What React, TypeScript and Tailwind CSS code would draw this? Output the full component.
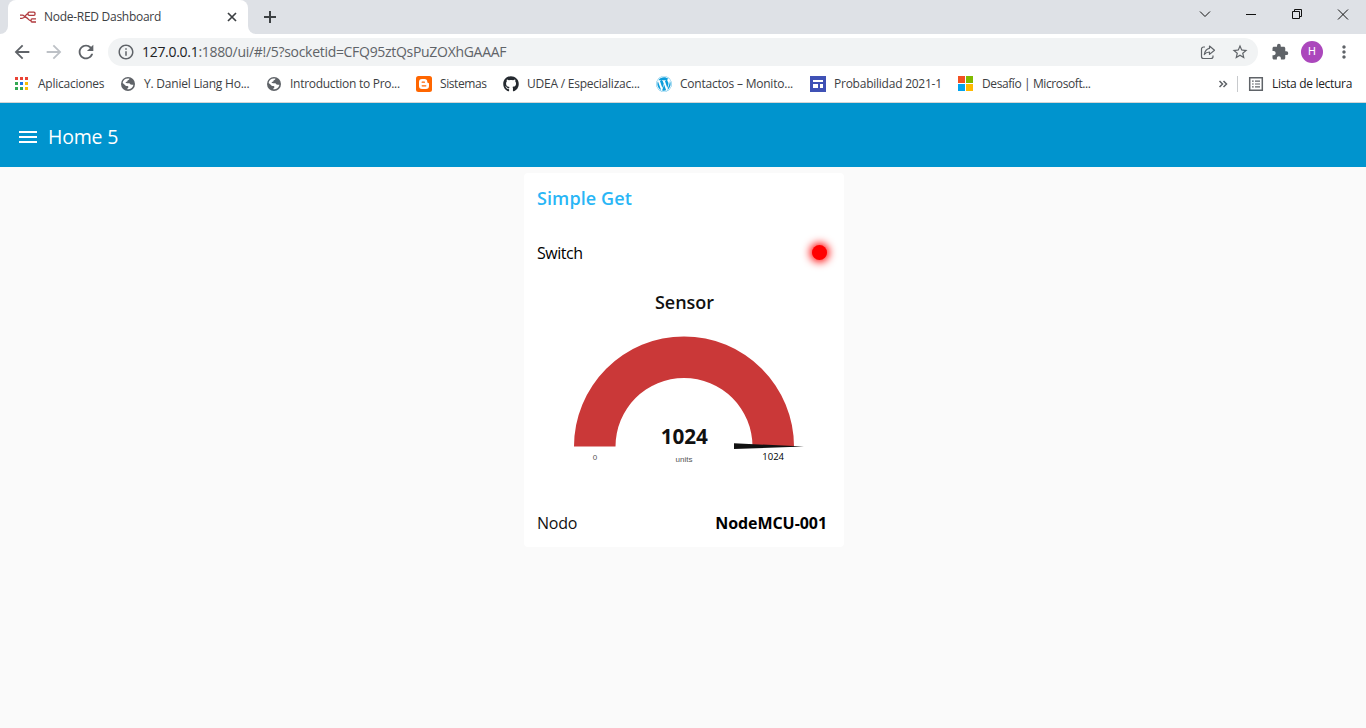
import React from "react";
import { MdArrowBack, MdArrowForward, MdRefresh, MdInfoOutline, MdStarBorder, MdExtension, MdMoreVert } from "react-icons/md";
import { FaGithub, FaWordpress } from "react-icons/fa";

function Text({ className = "", children }: { className?: string; children: React.ReactNode }) {
  return <span className={`whitespace-nowrap ${className}`}>{children}</span>;
}

const GlobeIcon = () => (
  <svg width="16" height="16" viewBox="0 0 16 16">
    <circle cx="8" cy="8" r="7" fill="#5f6368" />
    <path d="M9.300 2.600c.3 1-.5 1.400-1.400 1.700-.6.300-.2 1.200-1 1.500-.6.200-1.300.1-1.300.8 0 .6.700.6 1.400.6h2.200c.9 0 .8 1.100 1.500 1.400.8.300 1.900 0 2.700.1-.3 2-1.800 3.700-3.700 4.400-.8.200-1.700.2-2.500.1-.1-.8.600-1 1-1.500.4-.7.100-1.600-.7-1.700-.9-.1-1.500.1-2.200-.6C4.700 8.700 3.500 7.700 2.600 7 3 4.200 5.300 2 9.300 2.600z" fill="#fff" />
  </svg>
);

const NodeRedIcon = () => (
  <svg width="16" height="16" viewBox="0 0 16 16" fill="none" stroke="#b0393d" strokeWidth="1.300">
    <path d="M0 6.200h2.500c1.500 0 2 1.900 3.500 1.900M0 9.400h2c3.500 0 3-4.600 6-4.600M5 8c3 0 3 3.700 6 3.700" />
    <rect x="8" y="3.200" width="7" height="3.200" rx="1.100" />
    <path d="M16 9.800h-4c-1.300 0-1.300 3.200 0 3.200h4" />
  </svg>
);

const AppsIcon = () => (
  <svg width="16" height="16" viewBox="0 0 16 16" shapeRendering="crispEdges">
    <path fill="#ea4335" d="M1 1h3v3H1zM6 1h3v3H6zM11 1h3v3h-3z" />
    <path fill="#34a853" d="M1 6h3v3H1zM1 11h3v3H1zM6 11h3v3H6z" />
    <path fill="#1a73e8" d="M6 6h3v3H6z" />
    <path fill="#fbbc04" d="M11 6h3v3h-3zM11 11h3v3h-3z" />
  </svg>
);

const BloggerIcon = () => (
  <svg width="16" height="16" viewBox="0 0 16 16">
    <rect width="16" height="16" rx="2.500" fill="#ff6600" />
    <path fill="#fff" d="M6 3h2.500A2.800 2.800 0 0 1 11.300 5.800c0 .9.300 1.100 1 1.100.5 0 .7.300.7.700V10a3 3 0 0 1-3 3H6a3 3 0 0 1-3-3V6a3 3 0 0 1 3-3z" />
    <path d="M6.200 6.200h2.200M6.200 9.800h3.600" stroke="#ff6600" strokeWidth="1.300" strokeLinecap="round" />
  </svg>
);

const SitesIcon = () => (
  <svg width="16" height="16" viewBox="0 0 16 16" shapeRendering="crispEdges">
    <path fill="#3f51b5" d="M0 0h16v16H0z" />
    <path fill="#fff" d="M3 4h10v2H3zM3 8h5v4H3zM10 8h3v4h-3z" />
  </svg>
);

const MicrosoftIcon = () => (
  <svg width="16" height="16" viewBox="0 0 16 16" shapeRendering="crispEdges">
    <path fill="#f25022" d="M0 0h7v7H0z" />
    <path fill="#7fba00" d="M8 0h7v7H8z" />
    <path fill="#00a4ef" d="M0 8h7v7H0z" />
    <path fill="#ffb900" d="M8 8h7v7H8z" />
  </svg>
);

const bookmarks = [
  { icon: <AppsIcon />, label: "Aplicaciones", width: "w-[106px]", text: "tracking-[-0.25px]" },
  { icon: <GlobeIcon />, label: "Y. Daniel Liang Ho...", width: "w-[146px]", text: "tracking-[-0.22px]" },
  { icon: <GlobeIcon />, label: "Introduction to Pro...", width: "w-[150px]", text: "tracking-[-0.28px]" },
  { icon: <BloggerIcon />, label: "Sistemas", width: "w-[87px]", text: "tracking-[-0.42px]" },
  { icon: <FaGithub size={16} color="#24292f" />, label: "UDEA / Especializac...", width: "w-[153px]", text: "tracking-[-0.23px]" },
  { icon: <FaWordpress size={16} color="#0d9ddb" />, label: "Contactos – Monito...", width: "w-[154px]", text: "tracking-[-0.22px]" },
  { icon: <SitesIcon />, label: "Probabilidad 2021-1", width: "w-[148px]", text: "tracking-[-0.24px]" },
  { icon: <MicrosoftIcon />, label: "Desafío | Microsoft...", width: "w-[140px]", text: "tracking-[-0.4px]" },
];

function Gauge() {
  return (
    <svg width="320" height="216" viewBox="524 280 320 216" className="mt-1.5 block" fontFamily="'Open Sans', sans-serif">
      <path d="M574 446.500a110 110 0 0 1 220 0h-41.500a68.500 68.500 0 0 0-137 0z" fill="#ca3838" />
      <path d="M734 443.300L804 446.500L734 449z" fill="#111" />
      <text x="684.500" y="309" fontSize="18" fontWeight="600" textAnchor="middle" fill="#111">Sensor</text>
      <text x="684.300" y="444" fontSize="20.700" fontWeight="700" textAnchor="middle" fill="#111">1024</text>
      <text x="684" y="462" fontSize="8" fontFamily="'Liberation Sans', sans-serif" textAnchor="middle" fill="#555">units</text>
      <text x="595" y="460" fontSize="8" fontFamily="'Liberation Sans', sans-serif" textAnchor="middle" fill="#555">0</text>
      <text x="773.200" y="460" fontSize="9.500" textAnchor="middle" fill="#000">1024</text>
    </svg>
  );
}

export default function App() {
  return (
    <div className="flex h-[728px] w-[1366px] flex-col overflow-hidden bg-[#fafafa] font-['Open_Sans',sans-serif] text-[#3c4043]">
      <header className="h-[103px] shrink-0 border-b border-[#d5d5d5] bg-white">
        <div className="flex h-[34px] items-start bg-[#dee1e6]">
          <div className="flex w-2 self-stretch bg-white"><div className="w-2 rounded-br-lg bg-[#dee1e6]" /></div>
          <div className="flex h-[34px] w-[240px] items-center rounded-t-lg bg-white pr-2.5 pl-3">
            <NodeRedIcon />
            <Text className="ml-2 flex-none text-xs tracking-[-0.28px]">Node-RED Dashboard</Text>
            <svg className="ml-auto" width="12" height="12" viewBox="0 0 12 12" stroke="#3c4043" strokeWidth="1.700"><path d="M2 2l8 8M10 2l-8 8" /></svg>
          </div>
          <div className="w-2 self-stretch bg-white"><div className="h-full rounded-bl-lg bg-[#dee1e6]" /></div>
          <svg className="mt-[11px] ml-2" width="12" height="12" viewBox="0 0 12 12" stroke="#3c4043" strokeWidth="2"><path d="M0 6h12M6 0v12" /></svg>
          <svg className="mt-2 ml-auto" width="168" height="12" viewBox="0 0 168 12" fill="none" stroke="#111" strokeWidth="1">
            <path d="M2 3.500l5 5l5-5" />
            <path d="M48 6.500h10" />
            <path d="M94.500 3.500h7v7h-7zM96.500 3.500v-2h7v7h-2" />
            <path d="M140 1.500l10 10M150 1.500l-10 10" />
          </svg>
        </div>
        <div className="flex h-9 items-center pl-[11px] text-[#5f6368]">
          <MdArrowBack size={22} />
          <MdArrowForward size={22} className="ml-2.5 text-[#bdc1c6]" />
          <MdRefresh size={22} className="ml-2.5" />
          <div className="ml-[11px] flex h-7 w-[1150px] items-center rounded-full bg-[#f1f3f4] pr-[9px] pl-[9px]">
            <MdInfoOutline size={18} />
            <Text className="ml-[7px] text-sm tracking-[-0.3px]"><span className="text-[#202124]">127.0.0.1</span>:1880/ui/#!/5?socketid=CFQ95ztQsPuZOXhGAAAF</Text>
            <svg className="ml-auto" width="16" height="16" viewBox="0 0 16 16" fill="none" stroke="#5f6368" strokeWidth="1.200">
              <path d="M5 3H3.500A2 2 0 0 0 1.500 5v7.500a2 2 0 0 0 2 2H11a2 2 0 0 0 2-2V11.500" />
              <path d="M9.500 2l5 4.200-5 4.200V8C7 8 5.500 9 4.300 10.500 4.800 7.500 6.500 4.800 9.500 4.300z" strokeLinejoin="round" />
            </svg>
            <MdStarBorder size={18} className="ml-[15px]" />
          </div>
          <MdExtension size={18} className="ml-[13px]" />
          <div className="ml-3 flex h-[22px] w-[22px] items-center justify-center rounded-full bg-[#ab47bc] font-['Roboto',sans-serif] text-[11px] text-white">H</div>
          <MdMoreVert size={20} className="ml-[11px]" />
        </div>
        <div className="flex h-7 items-center pl-3.5 text-xs">
          {bookmarks.map((b) => (
            <div key={b.label} className={`flex shrink-0 items-center gap-2 ${b.width}`}>
              <span className="w-4">{b.icon}</span>
              <Text className={b.text}>{b.label}</Text>
            </div>
          ))}
          <svg className="ml-auto" width="10" height="10" viewBox="0 0 10 10" fill="none" stroke="#5f6368" strokeWidth="1.500"><path d="M1.500 2l3 3-3 3M5.500 2l3 3-3 3" /></svg>
          <div className="ml-[9px] h-4 w-px bg-[#c8cacd]" />
          <svg className="ml-2.5" width="16" height="16" viewBox="0 0 16 16" fill="none" stroke="#5f6368" strokeWidth="1.500">
            <path d="M1.700 1.700h12.600v12.600H1.700z" />
            <path d="M4 5.200h1.700M7 5.200h5M4 8h1.700M7 8h5M4 10.800h1.700M7 10.800h5" strokeWidth="1.200" />
          </svg>
          <Text className="mr-3.5 ml-2 tracking-[-0.31px] text-[#202124]">Lista de lectura</Text>
        </div>
      </header>
      <nav className="flex h-16 shrink-0 items-center bg-[#0094ce] pt-1 pl-[19px] text-white">
        <svg width="18" height="12" viewBox="0 0 18 12" fill="#fff" shapeRendering="crispEdges"><path d="M0 0h18v2H0zM0 5h18v2H0zM0 10h18v2H0z" /></svg>
        <Text className="ml-[11px] text-[19.5px] font-medium tracking-[-0.2px]">Home 5</Text>
      </nav>
      <main className="mx-auto mt-1.5 h-[374px] w-[320px] translate-x-px rounded-sm bg-white text-[#111]">
        <Text className="ml-[13px] inline-block pt-[11px] text-lg font-semibold tracking-[0.1px] text-[#29b6f6]">Simple Get</Text>
        <div className="mt-5 flex h-[42px] items-center justify-between px-[13px]">
          <Text className="text-base tracking-[-0.45px] text-black">Switch</Text>
          <div className="mr-[4.500px] mb-[2px] h-[15px] w-[15px] rounded-full bg-[#f00] shadow-[0_0_8px_2px_#f00]" />
        </div>
        <Gauge />
        <div className="mt-[15px] flex h-6 items-center justify-between pr-[17px] pl-[13px]">
          <Text className="text-base tracking-[-0.2px]">Nodo</Text>
          <Text className="text-base font-bold tracking-[-0.06px] text-black">NodeMCU-001</Text>
        </div>
      </main>
    </div>
  );
}
